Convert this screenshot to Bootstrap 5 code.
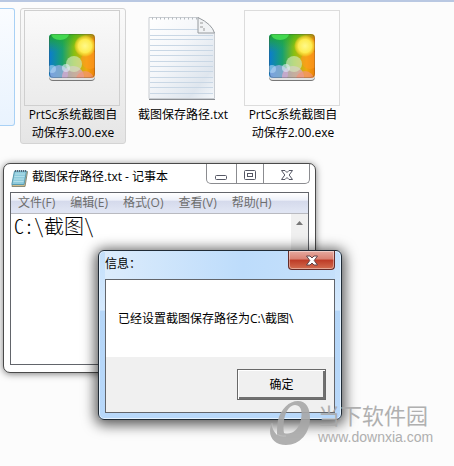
<!DOCTYPE html>
<html lang="zh-CN">
<head>
<meta charset="utf-8">
<meta name="viewport" content="width=device-width, initial-scale=1">
<title>截图保存路径</title>
<link href="https://cdn.jsdelivr.net/npm/bootstrap@5.3.0/dist/css/bootstrap.min.css" rel="stylesheet">
<style>
body{background:#fcfcfc;color:#000;font:12px/18px "Open Sans","Noto Sans CJK SC",sans-serif;min-height:100vh}
.desk{min-height:100vh;box-shadow:inset 0 2px #b9c8e2}
.files{padding-top:8px}
.edge-tile{width:15px;height:118px;border:1px solid #a9d1f5;border-left:0;border-radius:0 3px 3px 0;background:linear-gradient(#fafcff,#e9f3fe)}
.file{width:106px;margin-left:5px;padding:1px 3px 0;border:1px solid transparent;border-radius:3px;text-align:center;height:136px}
.file.chosen{border-color:#d4d4d4;background:linear-gradient(#fafafa,#e5e5e5)}
.thumb{width:96px;height:96px;border:1px solid #dcdcdc}
.chosen .thumb{border-color:#cfcfcf}
.thumb.bare{border-color:transparent}
.caption{margin:0 -6px}
.win{border:1px solid #4a4a4a;background:#fff}
.notepad{left:3px;top:163px;width:313px;border-radius:7px;padding:0 6px 7px;box-shadow:0 1px 7px rgba(0,0,0,.5)}
.title-row{height:28px}
.controls{width:104px;height:20px;border:1px solid #8b8c90;border-top:0;border-radius:0 0 5px 5px;margin-right:-1px}
.controls button{border:0;background:none;padding:0;line-height:1}
.controls button+button{border-left:1px solid #8b8c90}
.btn-min{width:28%}
.btn-max{width:27%}
.btn-shut{width:45%}
.pane{border:1px solid #62656b}
.menu{height:21px;background:linear-gradient(#fff 0,#eef1f9 35%,#d5daec 42%,#e0e5f3 90%);border-bottom:1px solid #b9bac0;padding-left:7px;gap:15px}
.menu a{color:#6d6d6d;text-decoration:none;line-height:19px}
.editor{height:150px}
.editor textarea{border:0;resize:none;outline:0;padding:1px 3px;font:300 20px/22px "Noto Sans CJK SC",monospace;font-feature-settings:"hwid";color:#000;overflow:hidden;background:#fff}
.scroll{width:17px;background:#f0f0f0;border:0;padding:6px 0 0}
.dialog{left:98px;top:250px;width:244px;border-color:#202b36;border-radius:6px;padding:0 6px 6px;background:linear-gradient(#c3dffb 0,#d5e9fd 35%,#b5d6f8 36%,#b8d8fa);box-shadow:inset 0 0 0 1px #e4f2ff,0 2px 13px 3px rgba(0,0,0,.65)}
.dialog .title-row{background:linear-gradient(90deg,#dcecfc,#bddcfb 60%,#c5e0fb)}
.close-red{width:47px;height:19px;border:1px solid #642c29;border-top:0;border-radius:0 0 4px 4px;padding:0;background:linear-gradient(#e6aaa0 0,#d98172 45%,#bd3a26 50%,#d36d50);box-shadow:inset 0 0 0 1px rgba(255,255,255,.4)}
.message{height:77px;padding:0 12px;background:#fff}
.actions{height:55px;padding:0 8px 1px;background:#f0f0f0}
.ok{width:89px;height:31px;padding:0;color:#000;background:#f0f0f0;border:1px solid #696969;box-shadow:inset 1px 1px #fff,inset -2px -2px #707070;font:12px/18px "Noto Sans CJK SC",sans-serif}
.brand{left:269px;top:400px;color:#a8a8a8;gap:7px;opacity:.9}
.brand-name{font:22px/28px "Noto Sans CJK SC",sans-serif}
.brand-url{font:14px/18px "Liberation Sans",sans-serif;color:#a8a8a8;text-decoration:none}
</style>
</head>
<body>
<svg class="position-absolute" width="0" height="0" aria-hidden="true">
<defs>
<linearGradient id="g1"><stop stop-color="#0a78d8"/><stop offset=".3" stop-color="#18a070"/><stop offset=".55" stop-color="#8cc010"/><stop offset=".8" stop-color="#efa810"/><stop offset="1" stop-color="#ee7a08"/></linearGradient>
<linearGradient id="g2" x2=".3" y2="1"><stop stop-color="#18a818" stop-opacity=".95"/><stop offset=".4" stop-color="#30b020" stop-opacity="0"/></linearGradient>
<radialGradient id="g4"><stop stop-color="#fff98a"/><stop offset=".6" stop-color="#fdec50"/><stop offset=".85" stop-color="#f8d830" stop-opacity=".6"/><stop offset="1" stop-color="#f2d028" stop-opacity="0"/></radialGradient>
<linearGradient id="g5" x2="1" y2="1"><stop stop-color="#fff"/><stop offset=".4" stop-color="#f5f7fa"/><stop offset=".8" stop-color="#dfe6ee"/><stop offset="1" stop-color="#f5f8fb"/></linearGradient>
<clipPath id="c1"><rect x="1" width="46" height="44" rx="4"/></clipPath>
</defs>
<symbol id="app" viewBox="0 0 48 48">
<rect x="1" y="3" width="46" height="44" rx="4" fill="#777"/><rect x="1" y="2" width="46" height="44" rx="4" fill="#e2e2e2"/>
<g clip-path="url(#c1)"><rect width="48" height="45" fill="url(#g1)"/><rect width="48" height="45" fill="url(#g2)"/>
<ellipse cx="12" cy="0" rx="9" ry="6" fill="#4be455" opacity=".8"/><circle cx="42" cy="26" r="9" fill="#ff9b20" opacity=".6"/><circle cx="37" cy="12" r="11" fill="url(#g4)"/>
<circle cx="11" cy="40" r="9" fill="#9daee7" opacity=".75"/><circle cx="25" cy="43" r="11" fill="#d9a8cc" opacity=".75"/><circle cx="37" cy="46" r="9" fill="#f29376" opacity=".7"/><circle cx="26" cy="30" r="8" fill="#d4e8bd" opacity=".65"/><circle cx="4" cy="35" r="4" fill="#b3d8f6" opacity=".6"/><circle cx="18" cy="34" r="4" fill="#e0edfa" opacity=".6"/></g>
<rect x="1.5" y=".5" width="45" height="43" rx="4" fill="none" stroke="#383838" stroke-opacity=".25"/>
</symbol>
</svg>
<main class="desk position-relative">
<section class="files d-flex" aria-label="文件">
<div class="edge-tile flex-shrink-0"></div>
<article class="file chosen flex-shrink-0">
<div class="thumb d-flex align-items-center justify-content-center"><svg width="48" height="48"><use href="#app"/></svg></div>
<div class="caption">PrtSc系统截图自<br>动保存3.00.exe</div>
</article>
<article class="file flex-shrink-0 ms-1">
<div class="thumb bare d-flex align-items-center justify-content-center">
<svg width="68" height="86" viewBox="0 0 68 86"><path d="M1 2.500H50L66.500 18V83.500H1z" fill="url(#g5)" stroke="#c9cdd2"/><path d="M1 84.500H67" stroke="#8b8f94"/><path d="M2 14.500H50M2 20.500H65M2 24.500H65M2 30.500H65M2 35.500H65M2 40.500H65M2 46.500H65M2 51.500H65M2 56.500H65M2 62.500H65M2 67.500H65M2 72.500H65M2 78.500H65" stroke="#c9d7e5"/><path d="M4 3.500h46" stroke="#b4b9be" stroke-width="2" stroke-dasharray="1 3"/><path d="M50 2.500V18L66.500 18Q64 9 50 2.500z" fill="#f1f3f5" stroke="#969a9e"/><path d="M52 8h3M52 12h3M56 16v-3" stroke="#999" fill="none"/></svg>
</div>
<div class="caption">截图保存路径.txt</div>
</article>
<article class="file flex-shrink-0 ms-1">
<div class="thumb d-flex align-items-center justify-content-center"><svg width="48" height="48"><use href="#app"/></svg></div>
<div class="caption">PrtSc系统截图自<br>动保存2.00.exe</div>
</article>
</section>

<section class="win notepad position-absolute" aria-label="记事本">
<header class="title-row d-flex align-items-start">
<svg class="mt-1" width="22" height="20" viewBox="-1 0 22 20"><path d="M4 3.500H16.500L14 18.500H1z" fill="#d0bd8c" stroke="#8a8b78"/><path d="M3.500 3H15.500L13 16.500H.8z" fill="#8ecbdc" stroke="#5a9bb0"/><path d="M4 6h10M3.500 8.500h10M3 11h10M2.500 13.500h10" stroke="#b2dfea"/><path d="M4 3h12" stroke="#567" stroke-width="2" stroke-dasharray="1 1"/></svg>
<span class="pt-1 flex-grow-1">截图保存路径.txt - 记事本</span>
<div class="controls d-flex">
<button type="button" class="btn-min" aria-label="最小化"><svg width="14" height="16" viewBox="0 0 14 16"><rect x="1.500" y="9.500" width="11" height="4" rx="1" fill="#fff" stroke="#555764"/></svg></button>
<button type="button" class="btn-max" aria-label="最大化"><svg width="14" height="16" viewBox="0 0 14 16"><rect x="1.500" y="4.500" width="11" height="9" rx="1" fill="#fff" stroke="#555764"/><rect x="4.500" y="7.500" width="5" height="3" fill="#fff" stroke="#555764"/></svg></button>
<button type="button" class="btn-shut" aria-label="关闭"><svg width="14" height="16" viewBox="0 0 14 16"><path d="M1.500 4.500H5L7 6.500 9 4.500h3.500L9.200 9l3.300 4.500H9L7 11.500 5 13.500H1.500L4.800 9z" fill="#fff" stroke="#555764"/></svg></button>
</div>
</header>
<div class="pane">
<nav class="menu d-flex" aria-label="菜单"><a href="#">文件(F)</a><a href="#">编辑(E)</a><a href="#">格式(O)</a><a href="#">查看(V)</a><a href="#">帮助(H)</a></nav>
<div class="editor d-flex"><textarea class="flex-grow-1" aria-label="文本" spellcheck="false">C:\截图\</textarea><button type="button" class="scroll d-flex justify-content-center flex-shrink-0" aria-label="向上滚动"><svg width="7" height="6"><path d="M0 5L3.500 1 7 5z" fill="#777"/></svg></button></div>
</div>
</section>

<section class="win dialog position-absolute" role="dialog" aria-labelledby="info-title">
<header class="title-row d-flex justify-content-between align-items-start"><span id="info-title" class="pt-1">信息：</span>
<button type="button" class="close-red d-flex justify-content-center align-items-center" aria-label="关闭"><svg width="12" height="11" viewBox="0 0 12 11"><path d="M.5 1H4l2 2 2-2h3.500L8.200 5.500 11.500 10H8L6 8 4 10H.5l3.300-4.500z" fill="#fff" stroke="#604448"/></svg></button></header>
<div class="pane">
<div class="message d-flex align-items-center">已经设置截图保存路径为C:\截图\</div>
<div class="actions d-flex align-items-center justify-content-end"><button type="button" class="ok">确定</button></div>
</div>
</section>

<aside class="brand position-absolute d-flex">
<svg width="42" height="46" viewBox="0 0 42 46" fill="currentColor" aria-hidden="true"><path fill-rule="evenodd" d="M9 20C12 9 20 1 29 1c8 0 12 7 12 17 0 15-10 27-24 27C7 45 1 39 1 31c0-3 1-6 2-8 0 5 2 9 5 12 0-5 0-10 1-15zM15 33c7 2 13-2 16-10 3-9 2-18-5-18-8 0-13 14-11 28z"/><path d="M3 23c0 9 6 14 14 13" fill="none" stroke="#fff" stroke-opacity=".2"/></svg>
<div class="d-flex flex-column"><span class="brand-name">当下软件园</span><a class="brand-url" href="#">www.downxia.com</a></div>
</aside>
</main>
<script src="https://cdn.jsdelivr.net/npm/bootstrap@5.3.0/dist/js/bootstrap.bundle.min.js"></script>
</body>
</html>
